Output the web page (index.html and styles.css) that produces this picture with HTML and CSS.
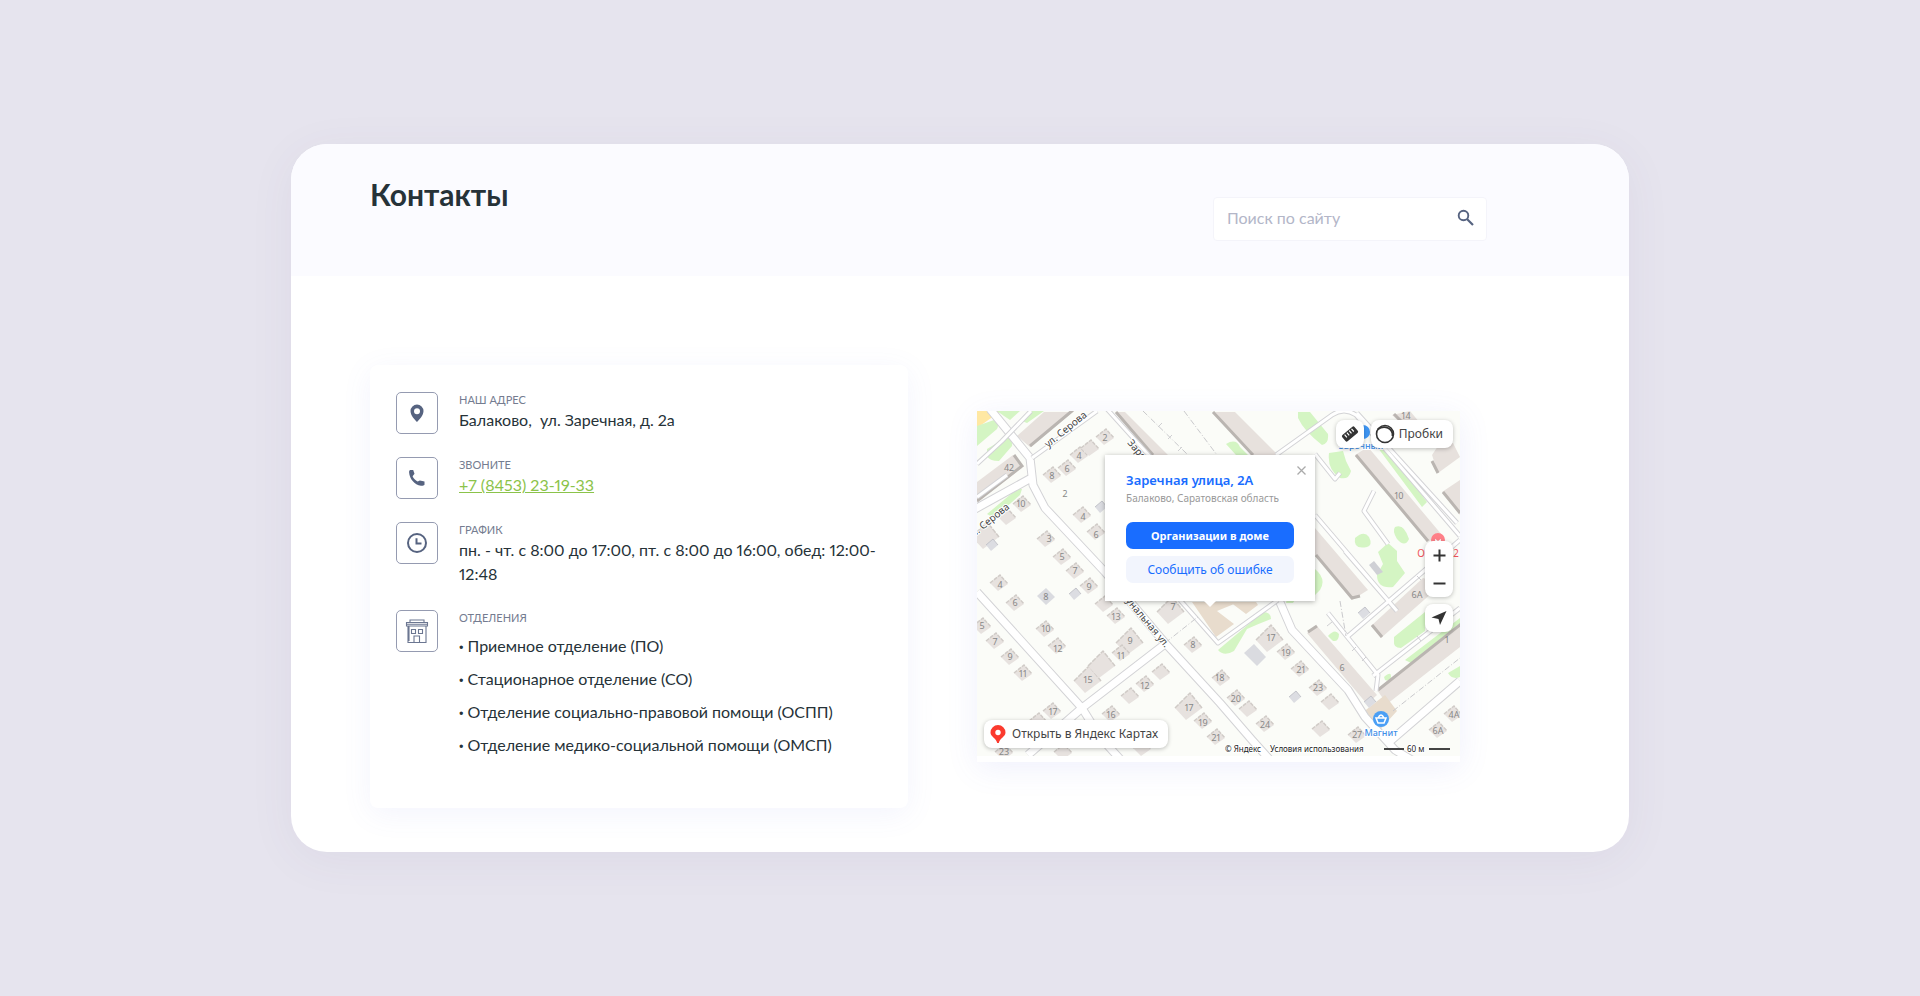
FILE: index.html
```html
<!DOCTYPE html>
<html lang="ru">
<head>
<meta charset="utf-8">
<meta name="viewport" content="width=device-width, initial-scale=1">
<title>Контакты</title>
<link rel="stylesheet" href="styles.css">
</head>
<body>
<main class="sheet">
  <header class="head">
    <h1 class="title">Контакты</h1>
    <form class="search" role="search">
      <input class="search-input" type="search" placeholder="Поиск по сайту" aria-label="Поиск по сайту">
      <button class="search-btn" type="submit" aria-label="Найти">
        <svg width="20" height="20" viewBox="0 0 20 20" fill="none" stroke="#566380"><circle cx="7.5" cy="7.5" r="4.8" stroke-width="1.9"/><path d="M11 11l6 6" stroke-width="2.2"/></svg>
      </button>
    </form>
  </header>

  <div class="content">
    <section class="contacts">
      <div class="item">
        <span class="icon"><svg width="24" height="24" viewBox="0 0 24 24"><path fill="#566380" fill-rule="evenodd" d="M12 3.500a6.500 6.500 0 0 0-6.500 6.500c0 4.200 4 8.500 6.500 11 2.500-2.500 6.500-6.800 6.500-11A6.500 6.500 0 0 0 12 3.500zm0 3.700a3 3 0 1 1 0 6 3 3 0 0 1 0-6z"/></svg></span>
        <div><div class="label">Наш адрес</div><div class="value">Балаково, &nbsp;ул. Заречная, д. 2а</div></div>
      </div>
      <div class="item">
        <span class="icon"><svg width="24" height="24" viewBox="0 0 24 24"><path fill="#566380" d="M5 4h3.200l1.300 3.800-1.900 2.400c1 2.300 2.700 4.200 5.100 5.400l2.200-1.200 4.600 1v3.400c-.8 1-2.500 1-3.500.9C9.300 19 4.500 12.500 4.100 6.500 4 5.400 4.300 4.500 5 4z"/></svg></span>
        <div><div class="label">Звоните</div><a class="value phone" href="tel:+78453231933">+7 (8453) 23-19-33</a></div>
      </div>
      <div class="item">
        <span class="icon"><svg width="24" height="24" viewBox="0 0 24 24" fill="none" stroke="#566380" stroke-width="2"><circle cx="12" cy="12" r="9"/><path d="M11.500 7.200v5.300h5"/></svg></span>
        <div><div class="label">График</div><div class="value">пн. - чт. с 8:00 до 17:00, пт. с 8:00 до 16:00, обед: 12:00-<wbr>12:48</div></div>
      </div>
      <div class="item">
        <span class="icon"><svg width="24" height="24" viewBox="0 0 24 24" fill="none" stroke="#6b7691" stroke-width="1.100"><path d="M5 3.500V1h14v2.500M1.500 3.500h21v3.500h-21zM3 7v16.500h18V7M1.500 5.200h21M4 7v15"/><path d="M6.500 10.500h4v4h-4zM13.500 10.500h4v4h-4zM9 23.500V17h5.500v6.500"/></svg></span>
        <div><div class="label">Отделения</div>
          <ul class="units">
            <li>Приемное отделение (ПО)</li>
            <li>Стационарное отделение (СО)</li>
            <li>Отделение социально-правовой помощи (ОСПП)</li>
            <li>Отделение медико-социальной помощи (ОМСП)</li>
          </ul>
        </div>
      </div>
    </section>

    <section class="map" aria-label="Карта">
      <svg class="map-canvas" viewBox="0 0 483 345" preserveAspectRatio="xMidYMid slice">
        <defs>
          <g id="h"><path fill="#e7e2df" d="M-9 0L1-8 9 1-1 8z"/><path fill="none" stroke="#d0cbc7" stroke-width="1.500" stroke-dasharray="4 1" d="M-9 0L1-8 9 1"/></g>
          <g id="b"><path fill="#e7e2df" d="M-14 2L1-13 13 2-3 14z"/><path fill="none" stroke="#d0cbc7" stroke-width="1.500" stroke-dasharray="5 1" d="M-14 2L1-13 13 2"/></g>
          <g id="g"><path fill="#dcdde2" d="M-6 0L1-6 6 0-1 6z"/><path fill="none" stroke="#c3c4ca" d="M-6 0L1-6 6 0"/></g>
        </defs>
        <path fill="#fbfcf8" d="M0 0h483v345H0z"/>
        <path fill="#ffe8a3" d="M0 17L24 0H0z"/>
        <g fill="#d4f5c3">
          <path d="M20 0h23l-10 9-6-4zM0 15l17-6q6 4 3 9L0 35zM10 38l20-12q6 3 5 9L22 50q-10 0-12-5zM45 10L52 0h15L50 12zM10 103l30-25h5l-2 6-26 23z"/>
          <path d="M321 1h12l18 22q1 10-6 11-18-14-24-27zM352 42l14-2 3 10 5 10q-2 9-11 7-13-8-11-25zM249 33q10-6 14 3l8 8h-12zM401 37h9l40 54-5 5z"/>
          <path d="M378 127q9-8 14-1 4 8-2 10-14 3-12-9zM418 116q9-4 14 12-4 9-12 0-5-8-2-12zM411 132l9 8v10l8 12-12 14q-16 2-16-12l6-11-5-12zM417 226l31-25v19l-24 17q-8 0-7-7zM428 249l55-42v12l-45 35z"/>
          <path d="M338 158q12 10 5 21l-5 5zM351 225q7-8 11-2 0 8-6 7zM407 266q7-6 7-1 0 6-6 4zM241 239l45-38q8 0 8 7-13 5-24 10l-13 22q-10 6-16-1zM471 262l12-7v11q-8 3-12-4zM310 187h9l-3 5h-7z"/>
        </g>

        <g fill="#e7e1dd">
          <path d="M40 25L67 1h29L53 36zM0 71l36-27 9 13L0 91zM140 1h8l43 43h-16zM238 1h20l43 43h-27zM378 44l13-8 74 88-15 7zM338 117l53 62-16 10-37-45z"/>
          <path d="M415 4l18-4 15 18h-18zM455 44l8-12h13l7 14-22 16zM465 81l18-12v35zM330 222l10-7 60 69-10 9zM400 279l83-67v24l-73 57zM394 215l52-48 19 6-61 54z"/>
        </g>
        <g fill="#e8dccd"><path d="M215 191h47l-22 9 17 13-18 13zM253 191h26l2 3-12 9zM385 302l23-18 12 16-20 22z"/></g>
        <g fill="none" stroke="#bab5b1" stroke-width="3">
          <path d="M53 35l43-36M0 90l45-35-8-11M139 1l37 43M236 1l40 43M379 44l72 86M339 144l36 43 8-2M331 221l9-6M401 279l83-66M395 214l10 12M466 81l17 21M455 50l6 12M417 3l11 11"/>
        </g>

        <g fill="none" stroke-linejoin="round">
          <path stroke="#d3d3d6" stroke-width="9" d="M13-2l40 49 3 27 12 23 60 64 60 71 55 60 32 37 18 20M0 181l105 116 18 29 20 22M105 297l83-64M105 297l-54 47M302 189l13 30 56 60 17 27 30 33 20 12M411 332l72-62M-2 98l58-32"/>
          <path stroke="#fff" stroke-width="7" d="M13-2l40 49 3 27 12 23 60 64 60 71 55 60 32 37 18 20M0 181l105 116 18 29 20 22M105 297l83-64M105 297l-54 47M302 189l13 30 56 60 17 27 30 33 20 12M411 332l72-62M-2 98l58-32"/>
          <path stroke="#d3d3d6" stroke-width="5" d="M55 47L120 0M130-2l47 52M203 189l38 43 60-43M338 104l82 96M420 200l-52-60M351 202l50 62-2 16M370 226l113-97M396 265l87-68M338 43l20 25 5-6M299 44l56-40q12-8 24 0l104 121M397 80l-10 20 24 33M0 86l30-22M380 2L480 112M0 53L25 30 54 0"/>
          <path stroke="#fff" stroke-width="3" d="M55 47L120 0M130-2l47 52M203 189l38 43 60-43M338 104l82 96M420 200l-52-60M351 202l50 62-2 16M370 226l113-97M396 265l87-68M338 43l20 25 5-6M299 44l56-40q12-8 24 0l104 121M397 80l-10 20 24 33M0 86l30-22M380 2L480 112M0 53L25 30 54 0"/>
          <path stroke="#c9c9cc" stroke-dasharray="6 2 1 2" d="M188 232l34-27M363 190l6 35M416 300l67-53M207 0l33 44M166 0l45 44"/>
          <path stroke="#cfcfd2" d="M375 240l4-4M385 250l4-4M440 225l4 5M455 213l4 5M185 12l-4 4M195 24l-4 4M205 36l-4 4M350 215l5-4M440 165l4 4M455 152l4 4"/>
        </g>

        <g>
          <use href="#h" x="75" y="64"/><use href="#h" x="90" y="57"/><use href="#h" x="102" y="44"/><use href="#h" x="113" y="37"/><use href="#h" x="128" y="26"/>
          <use href="#h" x="45" y="93"/><use href="#h" x="30" y="106"/><use href="#b" x="9" y="124"/><use href="#g" x="15" y="134"/>
          <use href="#h" x="105" y="104"/><use href="#h" x="119" y="121"/><use href="#g" x="124" y="96"/><use href="#h" x="69" y="128"/><use href="#h" x="85" y="146"/><use href="#h" x="98" y="160"/><use href="#h" x="112" y="175"/>
          <use href="#h" x="22" y="172"/><use href="#h" x="38" y="192"/><path fill="#dadbe0" d="M60 185l9-8 9 9-9 8z"/><use href="#g" x="98" y="183"/><use href="#h" x="127" y="193"/><use href="#h" x="139" y="205"/><use href="#b" x="194" y="199"/>
          <use href="#h" x="68" y="218"/><use href="#h" x="80" y="235"/><use href="#h" x="5" y="215"/><use href="#h" x="18" y="230"/><use href="#h" x="33" y="246"/><use href="#h" x="46" y="262"/>
          <use href="#b" x="111" y="268"/><use href="#b" x="125" y="253"/><use href="#b" x="153" y="230"/><use href="#h" x="144" y="242"/><use href="#h" x="216" y="234"/>
          <use href="#h" x="168" y="273"/><use href="#h" x="184" y="261"/><use href="#h" x="153" y="285"/><use href="#h" x="134" y="303"/><use href="#h" x="75" y="300"/><use href="#h" x="61" y="310"/><use href="#h" x="27" y="341"/><use href="#h" x="86" y="341"/><use href="#h" x="165" y="337"/>
          <use href="#b" x="212" y="295"/><use href="#h" x="226" y="310"/><use href="#h" x="239" y="326"/><use href="#h" x="244" y="267"/><use href="#h" x="259" y="287"/><use href="#h" x="271" y="298"/><use href="#h" x="288" y="313"/>
          <use href="#b" x="293" y="227"/><path fill="#dadbe0" d="M267 242l10-9 12 13-9 9z"/><use href="#h" x="309" y="241"/><use href="#h" x="323" y="258"/><use href="#h" x="341" y="277"/><use href="#h" x="353" y="291"/><use href="#g" x="318" y="286"/><use href="#h" x="344" y="318"/>
          <use href="#h" x="380" y="324"/><use href="#h" x="461" y="319"/><use href="#h" x="476" y="303"/><use href="#g" x="387" y="202"/><path fill="#cfd0d5" d="M392 154l5-4 9 11-6 3z"/><use href="#g" x="393" y="291"/>
        </g>

        <g class="num">
          <text x="32" y="60">42</text><text x="75" y="68">8</text><text x="90" y="61">6</text><text x="102" y="48">4</text><text x="128" y="30">2</text><text x="88" y="86">2</text><text x="44" y="96">10</text>
          <text x="106" y="109">4</text><text x="119" y="127">6</text><text x="72" y="131">3</text><text x="85" y="149">5</text><text x="98" y="163">7</text><text x="112" y="179">9</text>
          <text x="23" y="177">4</text><text x="38" y="195">6</text><text x="69" y="189">8</text><text x="139" y="209">13</text><text x="196" y="199">7</text><text x="69" y="221">10</text><text x="81" y="241">12</text>
          <text x="5" y="218">5</text><text x="18" y="234">7</text><text x="33" y="249">9</text><text x="46" y="266">11</text><text x="111" y="272">15</text><text x="153" y="233">9</text><text x="144" y="248">11</text><text x="216" y="237">8</text>
          <text x="168" y="278">12</text><text x="134" y="307">16</text><text x="76" y="304">17</text><text x="212" y="300">17</text><text x="226" y="315">19</text><text x="239" y="330">21</text><text x="27" y="344">23</text>
          <text x="243" y="270">18</text><text x="259" y="291">20</text><text x="288" y="317">24</text><text x="294" y="230">17</text><text x="309" y="245">19</text><text x="324" y="262">21</text><text x="341" y="280">23</text><text x="365" y="260">6</text><text x="380" y="327">27</text>
          <text x="461" y="323">6А</text><text x="477" y="307">4А</text><text x="440" y="187">6А</text><text x="470" y="232">1</text><text x="422" y="88">10</text><text x="429" y="8">14</text>
        </g>
        <g class="street">
          <text transform="translate(71 37) rotate(-39)">ул. Серова</text>
          <text text-anchor="end" transform="translate(33 97) rotate(-39)">ул. Серова</text>
          <text transform="translate(150 32) rotate(50)">Заречная ул.</text>
          <text text-anchor="end" transform="translate(188 237) rotate(50)">Коммунальная ул.</text>
        </g>
        <circle cx="386" cy="21" r="7" fill="#3f97f6"/>
        <text class="poi" x="384" y="38">Заречный</text>
        <circle cx="461" cy="129" r="5" fill="#fff" stroke="#ff8088" stroke-width="4"/><path fill="#ff8088" d="M457 127l4-4 4 4-4 3z"/>
        <text class="red" x="444" y="146">О</text><text class="red" x="479" y="146">2</text>
        <circle cx="404" cy="308" r="8" fill="#4b9ff5"/><path d="M399 307h10l-2 5h-6zM401 307q3-6 6 0" fill="none" stroke="#fff" stroke-width="1.500"/>
        <text class="poi" x="404" y="325">Магнит</text>
        <g class="legal"><text x="248" y="341">© Яндекс</text><text x="293" y="341">Условия использования</text><text x="430" y="341">60 м</text></g>
        <path d="M407 338h20M452 338h21" stroke="#444" stroke-width="2"/>
      </svg>

      <div class="popup">
        <button class="popup-close" type="button" aria-label="Закрыть"><svg width="9" height="9" viewBox="0 0 9 9" stroke="#aaa" stroke-width="1.300"><path d="M.5.500l8 8M8.500.500l-8 8"/></svg></button>
        <h2 class="popup-title">Заречная улица, 2А</h2>
        <p class="popup-sub">Балаково, Саратовская область</p>
        <button class="btn primary" type="button">Организации в доме</button>
        <button class="btn soft" type="button">Сообщить об ошибке</button>
      </div>

      <div class="tools">
        <button class="ctl ruler" type="button" aria-label="Линейка"><svg width="18" height="18" viewBox="0 0 18 18"><g transform="rotate(-40 9 9)"><rect x="1" y="5" width="16" height="8" rx="1.500" fill="#333"/><path d="M4.500 6v3.500M7.500 6v3.500M10.500 6v3.500M13.500 6v3.500" stroke="#fff" stroke-width="1.200"/></g></svg></button>
        <button class="ctl traffic" type="button"><svg width="20" height="20" viewBox="0 0 20 20" fill="none" stroke="#333"><circle cx="10" cy="10" r="8.500" stroke-width="1.600"/><path d="M2.500 5.500Q8 1.500 13 4t4.500 8" stroke-width="1.800"/></svg>Пробки</button>
      </div>
      <div class="side">
        <div class="ctl zoom">
          <button type="button" aria-label="Приблизить"><svg width="13" height="13" viewBox="0 0 13 13" stroke="#333" stroke-width="2"><path d="M6.500.500v12M.5 6.500h12"/></svg></button>
          <button type="button" aria-label="Отдалить"><svg width="13" height="13" viewBox="0 0 13 13" stroke="#333" stroke-width="2"><path d="M.5 6.500h12"/></svg></button>
        </div>
        <button class="ctl locate" type="button" aria-label="Моё местоположение"><svg width="16" height="16" viewBox="0 0 16 16"><path fill="#333" d="M15.500 1L9 15 7.500 9 .5 7.500z"/></svg></button>
      </div>
      <a class="ctl open" href="#map"><svg width="16" height="20" viewBox="0 0 16 20"><path fill="#fb3a2e" d="M8 1a7.500 7.500 0 0 0-7.500 7.500c0 4.500 5.500 5 6.700 10.500h1.600c1.200-5.500 6.700-6 6.700-10.500A7.500 7.500 0 0 0 8 1z"/><circle cx="8" cy="8.500" r="2.700" fill="#fff"/></svg>Открыть в Яндекс Картах</a>
    </section>
  </div>
</main>
</body>
</html>
```
FILE: styles.css
```css
* { box-sizing: border-box; margin: 0; padding: 0; }

body {
  min-height: 100vh;
  padding: 144px 16px;
  background: #e6e4ee;
  color: #263238;
  font-family: Lato, "Open Sans", sans-serif;
  font-size: 16px;
  line-height: 24px;
  font-variant-numeric: proportional-nums;
}

button { border: 0; background: none; font: inherit; color: inherit; cursor: pointer; }

.sheet {
  max-width: 1338px;
  margin: 0 auto;
  border-radius: 36px;
  background: #fff;
  box-shadow: 0 8px 48px rgba(80, 70, 120, 0.06);
  overflow: hidden;
}

.head {
  display: flex;
  justify-content: space-between;
  align-items: flex-start;
  padding: 32px 142px 35px 79px;
  background: #fbfbff;
}

.title { font-size: 30px; line-height: 36px; font-weight: 700; }

.search {
  display: flex;
  align-items: center;
  width: 274px;
  height: 44px;
  margin-top: 21px;
  padding: 0 10px 2px 13px;
  background: #fff;
  border: 1px solid #f4f4fa;
  border-radius: 4px;
}
.search-input { flex: 1; min-width: 0; border: 0; outline: 0; background: none; font: inherit; color: #263238; }
.search-input::placeholder { color: #b3b6c8; opacity: 1; }
.search-btn { display: flex; }

.content {
  display: grid;
  grid-template-columns: 538fr 483fr;
  align-items: start;
  gap: 69px;
  padding: 89px 169px 44px 79px;
}

.contacts {
  display: flex;
  flex-direction: column;
  gap: 23px;
  padding: 27px 26px 47px;
  border-radius: 8px;
  background: #fff;
  box-shadow: 0 6px 30px rgba(100, 110, 230, 0.08);
}

.item { display: flex; gap: 21px; }
.icon {
  display: flex;
  flex: none;
  align-items: center;
  justify-content: center;
  width: 42px;
  height: 42px;
  border: 1px solid #959bb1;
  border-radius: 5px;
}
.label { color: #747c90; font-size: 11px; line-height: 16px; text-transform: uppercase; }
.value { display: block; }
.phone { color: #8bc34a; text-decoration: underline; }
.item:nth-child(3) { padding-bottom: 1px; }

.units { margin-top: 3px; list-style: none; line-height: 33px; }
.units li::before { content: "·"; margin-right: 4px; font-weight: 900; line-height: 1; }

.map {
  position: relative;
  margin-top: 46px;
  padding-bottom: 6px;
  background: #fff;
  box-shadow: 0 6px 30px rgba(100, 110, 230, 0.1);
  font-family: "Noto Sans", sans-serif;
}
.map-canvas { display: block; width: 100%; }
.num { font-size: 9px; fill: #888; text-anchor: middle; }
.street { font-size: 10px; fill: #444; stroke: #fff; stroke-width: 2px; paint-order: stroke; }
.poi { font-size: 9px; font-weight: 500; fill: #3f8fe8; stroke: #fff; stroke-width: 2px; paint-order: stroke; text-anchor: middle; }
.red { font-size: 10px; fill: #f0555c; text-anchor: middle; }
.legal { font-size: 8px; fill: #222; stroke: #fff; stroke-width: 2px; paint-order: stroke; }

.popup {
  position: absolute;
  left: 128px;
  top: 44px;
  width: 210px;
  padding: 15px 21px 18px;
  background: #fff;
  box-shadow: 0 1px 5px rgba(0, 0, 0, 0.3);
}
.popup::after {
  content: "";
  position: absolute;
  left: 50%;
  top: 100%;
  margin-left: -6px;
  border: 6px solid transparent;
  border-top-color: #fff;
  border-bottom: 0;
}
.popup-close { position: absolute; right: 9px; top: 11px; display: flex; }
.popup-title { font-size: 13px; line-height: 20px; font-weight: 600; color: #196dff; }
.popup-sub { margin-bottom: 16px; font-size: 10px; line-height: 16px; color: #999; }
.btn { display: block; width: 100%; height: 27px; border-radius: 7px; font-size: 12px; line-height: 27px; white-space: nowrap; }
.primary { background: #196dff; color: #fff; font-size: 11px; font-weight: 700; }
.soft { margin-top: 7px; background: #f2f5fd; color: #196dff; }

.ctl { border-radius: 8px; background: #fff; box-shadow: 0 1px 4px rgba(0, 0, 0, 0.25); color: #444; font-size: 12px; }
.tools { position: absolute; right: 7px; top: 9px; display: flex; gap: 7px; }
.ruler { display: flex; align-items: center; justify-content: center; width: 28px; height: 28px; }
.traffic { display: flex; align-items: center; gap: 4px; height: 28px; padding: 0 10px 0 4px; }
.side { position: absolute; right: 7px; top: 130px; display: flex; flex-direction: column; gap: 7px; }
.zoom button { display: flex; align-items: center; justify-content: center; width: 28px; height: 28px; }
.locate { display: flex; align-items: center; justify-content: center; width: 28px; height: 28px; }
.open { position: absolute; left: 7px; bottom: 14px; display: flex; align-items: center; gap: 6px; height: 28px; padding: 0 10px 0 6px; text-decoration: none; white-space: nowrap; }
```
